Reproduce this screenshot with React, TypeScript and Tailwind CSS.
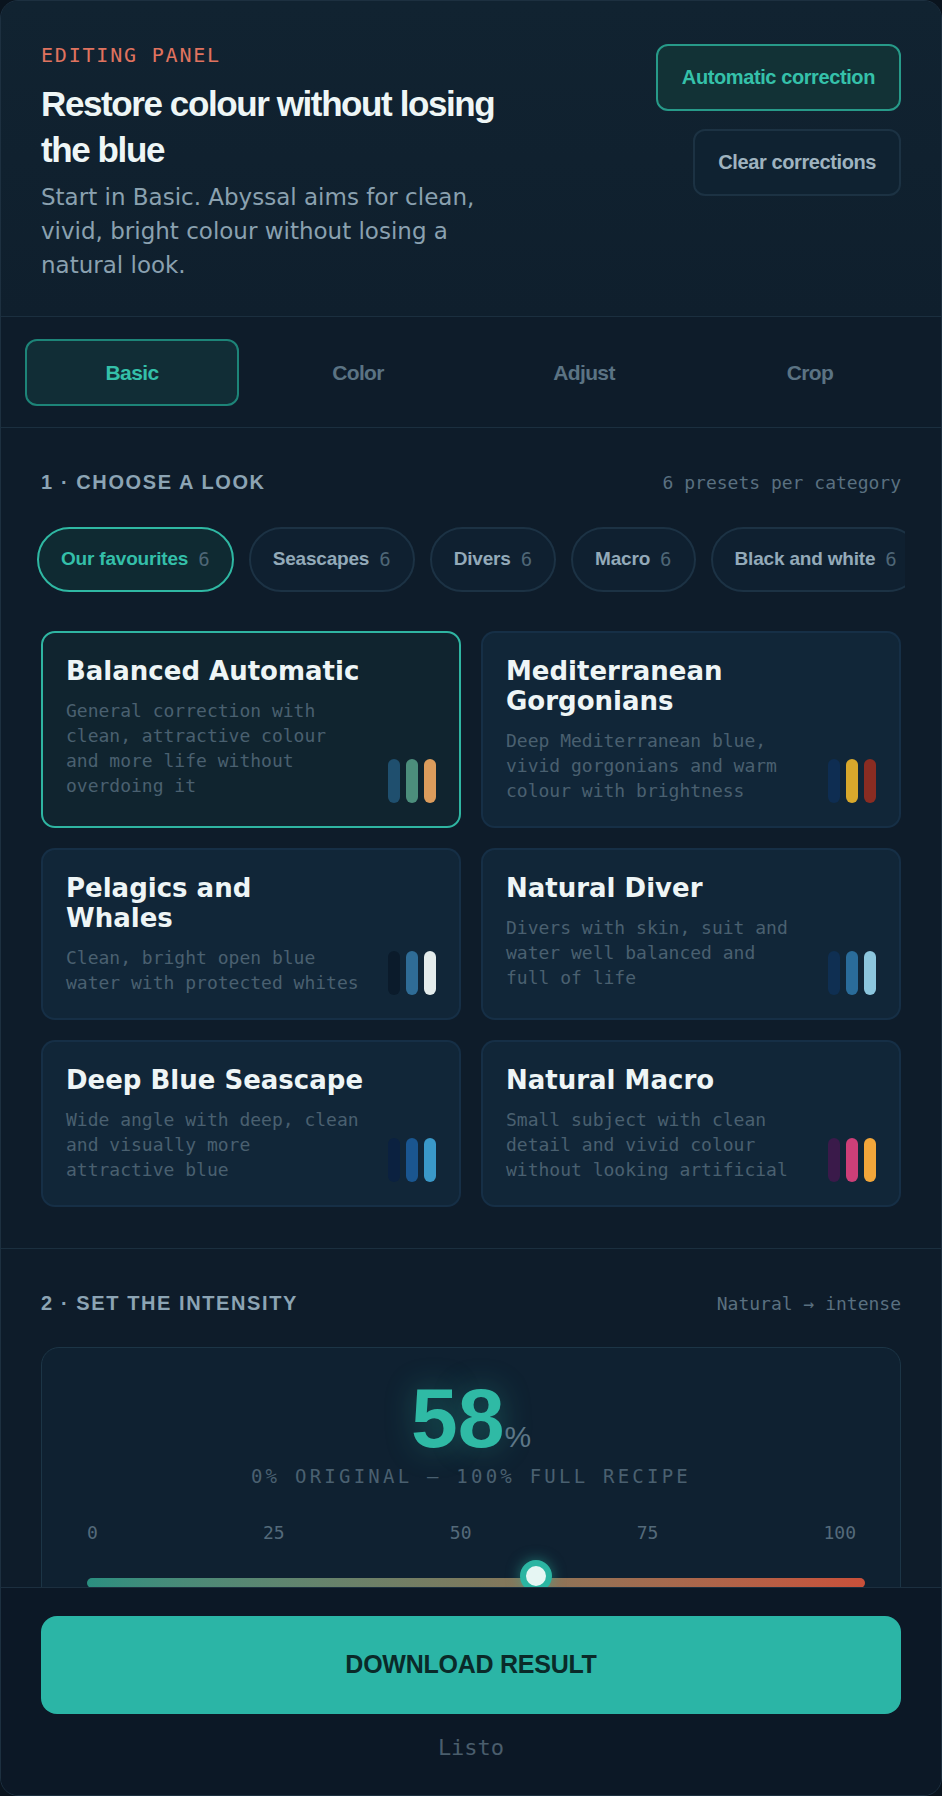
import React from "react";

const cond = "font-['Liberation_Sans','Arial',sans-serif]";
const mono = "font-['DejaVu_Sans_Mono',monospace]";
const sans = "font-['DejaVu_Sans',sans-serif]";

type Look = {
  title: string;
  desc: string;
  bars: string[];
  active?: boolean;
};

const tabs = ["Basic", "Color", "Adjust", "Crop"];

const categories = ["Our favourites", "Seascapes", "Divers", "Macro", "Black and white"];

const looks: Look[] = [
  {
    title: "Balanced Automatic",
    desc: "General correction with clean, attractive colour and more life without overdoing it",
    bars: ["bg-[#1f4f6e]", "bg-[#4c8e7c]", "bg-[#dc9c5c]"],
    active: true,
  },
  {
    title: "Mediterranean Gorgonians",
    desc: "Deep Mediterranean blue, vivid gorgonians and warm colour with brightness",
    bars: ["bg-[#0e2d52]", "bg-[#d8a82c]", "bg-[#8a2c22]"],
  },
  {
    title: "Pelagics and Whales",
    desc: "Clean, bright open blue water with protected whites",
    bars: ["bg-[#0b1b2b]", "bg-[#2f6c96]", "bg-[#e4ecec]"],
  },
  {
    title: "Natural Diver",
    desc: "Divers with skin, suit and water well balanced and full of life",
    bars: ["bg-[#0f2f52]", "bg-[#2a6c9a]", "bg-[#8cc6de]"],
  },
  {
    title: "Deep Blue Seascape",
    desc: "Wide angle with deep, clean and visually more attractive blue",
    bars: ["bg-[#0b2140]", "bg-[#1a5690]", "bg-[#3a98c8]"],
  },
  {
    title: "Natural Macro",
    desc: "Small subject with clean detail and vivid colour without looking artificial",
    bars: ["bg-[#3a1a4a]", "bg-[#cc3f78]", "bg-[#f2a63a]"],
  },
];

const ticks = ["0", "25", "50", "75", "100"];

function SectionHeading({ title, note }: { title: string; note: string }) {
  return (
    <div className="flex h-8 items-center justify-between">
      <h2 className={`${cond} text-[20px] font-bold uppercase tracking-[0.08em] text-[#8ca4b4]`}>{title}</h2>
      <span className={`${mono} text-[18px] text-[#5a7080]`}>{note}</span>
    </div>
  );
}

function LookCard({ look }: { look: Look }) {
  return (
    <button
      className={`flex flex-col rounded-[14px] border-2 p-[23px] text-left ${
        look.active ? "border-[#2fb5a2] bg-[#10242f]" : "border-[#18324a]/80 bg-[#112638]"
      }`}
    >
      <div className="flex flex-1 items-end gap-[22px]">
        <div className="w-[300px] self-start">
          <h3 className={`${sans} text-[26px] font-bold leading-[30px] text-[#eef5f6]`}>{look.title}</h3>
          <p className={`${mono} mt-3 text-[18px] leading-[25px] text-[#4a6070]`}>{look.desc}</p>
        </div>
        <div className="flex gap-[6px]">
          {look.bars.map((c, i) => (
            <span key={i} className={`h-[44px] w-3 rounded-full ${c}`} />
          ))}
        </div>
      </div>
    </button>
  );
}

export default function App() {
  const intensity = 58;

  return (
    <div className="min-h-screen bg-[#0a141e]">
      <div className="flex h-screen flex-col overflow-hidden rounded-[18px] border border-[#1d3040] bg-[#0e1c2a]">
        {/* header */}
        <header className="flex shrink-0 justify-between border-b border-[#1b2f3f] bg-gradient-to-b from-[#112331] to-[#0f1f2d] px-10 pt-10 pb-[34px]">
          <div className="max-w-[470px]">
            <p className={`${mono} text-[20px] leading-[28px] tracking-[0.09em] text-[#e0735f]`}>EDITING PANEL</p>
            <h1 className={`${cond} mt-3 text-[35px] font-bold leading-[46px] tracking-[-0.04em] text-[#eef6f6]`}>
              Restore colour without losing the blue
            </h1>
            <p className={`${sans} mt-[7px] text-[23px] leading-[34px] text-[#8aa1b0]`}>
              Start in Basic. Abyssal aims for clean, vivid, bright colour without losing a natural look.
            </p>
          </div>
          <div className="flex flex-col items-end gap-[18px] pt-[3px]">
            <button
              className={`${cond} rounded-[12px] border-2 border-[#279a89] bg-[#123236] px-6 py-[18px] text-[20px] font-bold leading-[27px] tracking-[-0.02em] text-[#35c1aa]`}
            >
              Automatic correction
            </button>
            <button
              className={`${cond} rounded-[12px] border-2 border-[#1c3243] bg-[#0f2231] px-[23px] py-[18px] text-[20px] font-bold leading-[27px] tracking-[-0.02em] text-[#9fb3bf]`}
            >
              Clear corrections
            </button>
          </div>
        </header>

        {/* tabs */}
        <nav className="grid shrink-0 grid-cols-4 gap-3 border-b border-[#1b2f3f] bg-[#0e1c2a] px-6 pt-[22px] pb-[21px]">
          {tabs.map((t, i) => (
            <button
              key={t}
              className={`${cond} h-[67px] rounded-[12px] border-2 text-[21px] font-bold tracking-[-0.03em] ${
                i === 0 ? "border-[#1d8478] bg-[#112d36] text-[#34c0a9]" : "border-transparent text-[#5b7383]"
              }`}
            >
              {t}
            </button>
          ))}
        </nav>

        <main className="min-h-0 flex-1 overflow-y-auto [scrollbar-width:none]">
          {/* looks */}
          <section className="border-b border-[#1b2f3f] px-10 pt-[38px] pb-[41px]">
            <SectionHeading title="1 · Choose a look" note="6 presets per category" />

            <div className="-mx-1 mt-[29px] flex gap-[15px] overflow-x-auto [scrollbar-width:none]">
              {categories.map((c, i) => (
                <button
                  key={c}
                  className={`flex h-[65px] shrink-0 items-center gap-[10px] rounded-full border-2 px-[22px] ${
                    i === 0 ? "border-[#2fb8a3] bg-[#0f2a32]" : "border-[#1c3244] bg-[#0f2030]"
                  }`}
                >
                  <span
                    className={`${cond} text-[19px] font-bold tracking-[-0.01em] ${
                      i === 0 ? "text-[#34bfa9]" : "text-[#93aab9]"
                    }`}
                  >
                    {c}
                  </span>
                  <span className={`${mono} text-[19px] text-[#4e6676]`}>6</span>
                </button>
              ))}
            </div>

            <div className="mt-[39px] grid grid-cols-2 gap-5">
              {looks.map((l) => (
                <LookCard key={l.title} look={l} />
              ))}
            </div>
          </section>

          {/* intensity */}
          <section className="px-10 pt-[38px] pb-10">
            <SectionHeading title="2 · Set the intensity" note="Natural → intense" />

            <div className="mt-[28px] rounded-[18px] border border-[#1c3546] bg-[#0f2131] pt-[28px] pb-10">
              <div className="flex items-baseline justify-center">
                <span className="font-['Liberation_Sans',sans-serif] text-[84px] font-bold leading-[84px] text-[#2fbaa5] [text-shadow:0_0_30px_rgba(45,190,165,0.35)]">
                  {intensity}
                </span>
                <span className="font-['Liberation_Sans',sans-serif] text-[30px] text-[#5d7787]">%</span>
              </div>
              <p className={`${mono} mt-[2px] text-center text-[19px] leading-[28px] tracking-[0.17em] text-[#4a6070]`}>
                0% ORIGINAL — 100% FULL RECIPE
              </p>

              <div className="pl-[45px] pr-[35px]">
                <div className={`${mono} mt-[31px] flex justify-between pr-[9px] text-[18px] leading-[24px] text-[#546a7a]`}>
                  {ticks.map((t) => (
                    <span key={t}>{t}</span>
                  ))}
                </div>
                <div className="relative mt-[33px] h-[10px] rounded-full bg-gradient-to-r from-[#2a8f80] via-[#7d7a5e] to-[#c9503a]">
                  <span
                    className="absolute -top-[18px] h-8 w-8 rounded-full border-[6px] border-[#2bb5a2] bg-[#e6f6f3] shadow-[0_0_14px_rgba(43,181,160,0.55)]"
                    style={{ left: `calc(${intensity / 100} * (100% - 32px))` }}
                  />
                </div>
              </div>
              <div className="h-24" />
            </div>
          </section>
        </main>

        {/* footer */}
        <footer className="shrink-0 border-t border-[#1c2f3f] bg-[#0c1826] px-10 pt-[28px] pb-8">
          <button
            className={`${cond} h-[98px] w-full rounded-[16px] bg-[#2bb5a6] text-[25px] font-bold tracking-[-0.01em] text-[#0a2a29]`}
          >
            DOWNLOAD RESULT
          </button>
          <p className={`${mono} mt-[19px] text-center text-[22px] leading-[30px] text-[#4a5d6c]`}>Listo</p>
        </footer>
      </div>
    </div>
  );
}
